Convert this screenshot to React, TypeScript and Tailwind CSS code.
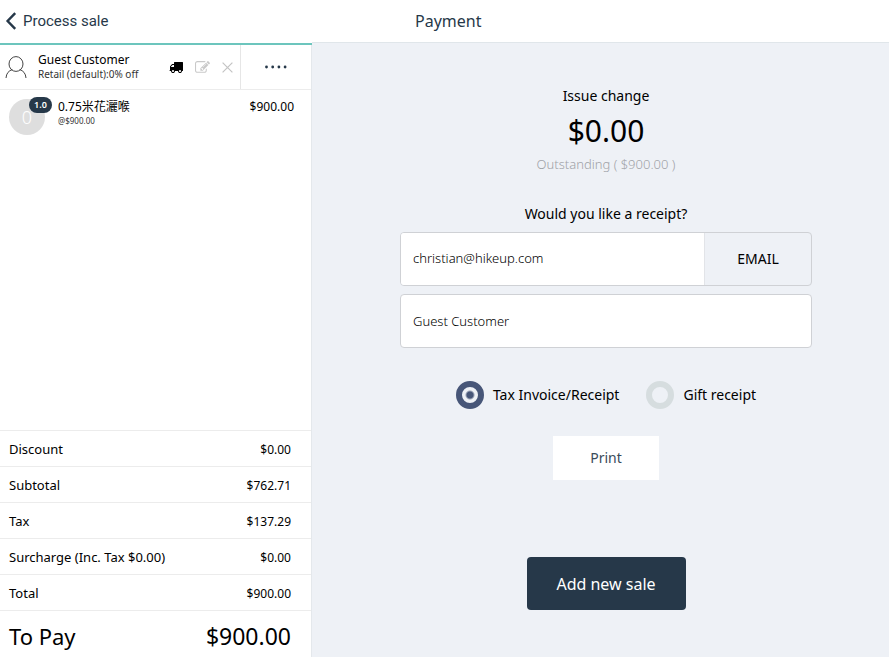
import { ReactNode } from "react";

const totals = [
  { label: "Discount", value: "$0.00" },
  { label: "Subtotal", value: "$762.71" },
  { label: "Tax", value: "$137.29" },
  { label: "Surcharge (Inc. Tax $0.00)", value: "$0.00" },
  { label: "Total", value: "$900.00" },
];

const BackIcon = () => (
  <svg viewBox="0 0 12 18" className="w-3 h-[18px]" fill="none" stroke="currentColor" strokeWidth="2.4">
    <path d="M10.2 1.2 2.6 9l7.6 7.8" />
  </svg>
);

const UserIcon = () => (
  <svg viewBox="0 0 22 23" className="w-[22px] h-[23px] shrink-0" fill="none" stroke="#444" strokeWidth="1">
    <ellipse cx="11" cy="8" rx="7" ry="7.4" />
    <path d="M1 22c.3-4.6 2.8-7.4 6.3-8.4M21 22c-.3-4.6-2.8-7.4-6.3-8.4" />
  </svg>
);

const TruckIcon = () => (
  <svg viewBox="0 0 1792 1792" className="w-[14px] h-[14px]" fill="currentColor">
    <path d="M640 1408q0-52-38-90t-90-38-90 38-38 90 38 90 90 38 90-38 38-90zm-384-512h384v-256h-158q-13 0-22 9l-195 195q-9 9-9 22v30zm1280 512q0-52-38-90t-90-38-90 38-38 90 38 90 90 38 90-38 38-90zm256-1088v1024q0 15-4 26.5t-13.5 18.5-16.5 11.5-23.5 6-22.5 2-25.5 0-22.5-.5q0 106-75 181t-181 75-181-75-75-181h-384q0 106-75 181t-181 75-181-75-75-181h-64q-3 0-22.5.5t-25.5 0-22.5-2-23.5-6-16.5-11.5-13.5-18.5-4-26.5q0-26 19-45t45-19v-320q0-8-.5-35t0-38 2.5-34.5 6.5-37 14-30.5 22.5-30l198-198q19-19 50.5-32t58.5-13h160v-192q0-26 19-45t45-19h1024q26 0 45 19t19 45z" />
  </svg>
);

const EditIcon = () => (
  <svg viewBox="0 0 1792 1792" className="w-[15px] h-[15px]" fill="currentColor">
    <path d="M888 1184l116-116-152-152-116 116v56h96v96h56zm440-720q-16-16-33 1l-350 350q-17 17-1 33t33-1l350-350q17-17 1-33zm80 594v190q0 119-84.5 203.5t-203.5 84.5h-832q-119 0-203.5-84.5t-84.5-203.5v-832q0-119 84.5-203.5t203.5-84.5h832q63 0 117 25 15 7 18 23 3 17-9 29l-49 49q-14 14-32 8-23-6-45-6h-832q-66 0-113 47t-47 113v832q0 66 47 113t113 47h832q66 0 113-47t47-113v-126q0-13 9-22l64-64q15-15 35-7t20 29zm-96-738l288 288-672 672h-288v-288zm444 132l-92 92-288-288 92-92q28-28 68-28t68 28l152 152q28 28 28 68t-28 68z" />
  </svg>
);

const CloseIcon = () => (
  <svg viewBox="0 0 11 11" className="w-[11px] h-[11px]" fill="none" stroke="currentColor" strokeWidth="1.2">
    <path d="M.6.6l9.8 9.8M10.4.6.6 10.4" />
  </svg>
);

const DotsIcon = () => (
  <svg viewBox="0 0 24 4" className="w-6 h-1" fill="currentColor">
    <circle cx="2.5" cy="2" r="1.4" />
    <circle cx="8.7" cy="2" r="1.4" />
    <circle cx="14.9" cy="2" r="1.4" />
    <circle cx="21.1" cy="2" r="1.4" />
  </svg>
);

interface ReceiptOptionProps {
  children: ReactNode;
  checked?: boolean;
}

const ReceiptOption = ({ children, checked }: ReceiptOptionProps) => (
  <label className="flex items-center gap-[9px] text-sm whitespace-nowrap">
    <input
      type="radio"
      name="receipt"
      defaultChecked={checked}
      className="appearance-none w-7 h-7 shrink-0 rounded-full border-6 border-[#d6dddf] checked:border-[#475678] checked:bg-[radial-gradient(circle,#475678_3px,#eef1f6_5px)] bg-origin-border bg-no-repeat"
    />
    {children}
  </label>
);

const Sidebar = () => (
  <aside className="w-[312px] shrink-0 flex flex-col bg-white">
    <header className="h-[45px] border-b-2 border-[#6cc5bd]">
      <button className="h-[42px] flex items-center gap-1.5 pl-[5px] text-[15px] text-[#263849] font-[Roboto,sans-serif]">
        <BackIcon />
        Process sale
      </button>
    </header>

    <div className="flex-1 flex flex-col border-r border-[#e4e8ec]">
      <div className="h-[45px] flex border-b border-[#ececec]">
        <div className="flex-1 flex items-center pl-[5px] pr-[7px]">
          <UserIcon />
          <div className="flex-1 pl-[11px] whitespace-nowrap">
            <div className="text-xs leading-[14px]">Guest Customer</div>
            <div className="text-[10px] leading-[14px] text-[#333]">Retail (default):0% off</div>
          </div>
          <div className="flex items-center gap-3">
            <button aria-label="Deliver order"><TruckIcon /></button>
            <button aria-label="Edit customer" className="text-[#c9c9c9]"><EditIcon /></button>
            <button aria-label="Remove customer" className="text-[#c4c4c4]"><CloseIcon /></button>
          </div>
        </div>
        <button aria-label="More" className="w-[71px] flex items-center justify-center border-l border-[#e6e6e6] text-[#263849]">
          <DotsIcon />
        </button>
      </div>

      <div className="flex-1 flex items-start pl-[9px] pr-[17px] pt-[9px]">
        <div className="relative w-9 h-9 shrink-0 rounded-full bg-[#dedede] flex items-center justify-center text-lg text-white font-light">
          0
          <span className="absolute -top-0.5 left-[20px] h-4 w-[23px] rounded-full bg-[#263849] flex items-center justify-center text-[9px] font-semibold">
            1.0
          </span>
        </div>
        <div className="flex-1 pl-[13px]">
          <div className="text-xs leading-4">0.75米花灑喉</div>
          <div className="text-[8px] leading-3 text-[#333]">@$900.00</div>
        </div>
        <div className="text-xs leading-4">$900.00</div>
      </div>

      <dl className="text-[13px]">
        {totals.map(({ label, value }) => (
          <div key={label} className="h-9 flex items-center justify-between pl-[9px] pr-5 pt-0.5 border-t border-[#ececec]">
            <dt>{label}</dt>
            <dd className="text-xs">{value}</dd>
          </div>
        ))}
        <div className="h-[47px] flex items-center justify-between pl-[9px] pr-5 pt-1 border-t border-[#ececec]">
          <dt className="text-[22px]">To Pay</dt>
          <dd className="text-[23px]">$900.00</dd>
        </div>
      </dl>
    </div>
  </aside>
);

const Payment = () => (
  <main className="flex-1 flex flex-col">
    <header className="h-[43px] flex items-center pl-[103px] bg-white border-b border-[#e0e6ea] text-base text-[#263849]">
      <h1>Payment</h1>
    </header>
    <section className="flex flex-col items-center pl-[88px] pr-[77px] pt-[43px]">
      <h2 className="text-sm leading-5">Issue change</h2>
      <p className="mt-2 text-[30px] leading-[34px]">$0.00</p>
      <p className="mt-1.5 text-[13px] leading-5 font-light text-[#9fa2a7]">Outstanding ( $900.00 )</p>

      <p className="mt-[30px] text-sm leading-5">Would you like a receipt?</p>
      <div className="mt-2 w-full h-[54px] flex rounded border border-[#cfd1d5] overflow-hidden">
        <input
          aria-label="Email"
          defaultValue="christian@hikeup.com"
          className="flex-1 min-w-0 px-3 bg-white text-[13px] font-light text-black"
        />
        <button className="w-[107px] border-l border-[#e2e4e8] text-sm">EMAIL</button>
      </div>
      <input
        aria-label="Customer name"
        defaultValue="Guest Customer"
        className="mt-2 w-full h-[54px] px-3 rounded border border-[#cfd1d5] bg-white text-[13px] font-light text-black"
      />

      <div className="mt-[33px] flex gap-[27px]">
        <ReceiptOption checked>Tax Invoice/Receipt</ReceiptOption>
        <ReceiptOption>Gift receipt</ReceiptOption>
      </div>

      <button className="mt-[27px] w-[106px] h-11 bg-white text-sm text-[#3a4a5a]">Print</button>
      <button className="mt-[77px] w-[159px] h-[53px] rounded bg-[#263849] text-base text-white">Add new sale</button>
    </section>
  </main>
);

export default function App() {
  return (
    <div className="min-h-screen flex bg-[#eef1f6] text-black font-['Noto_Sans','Noto_Sans_CJK_TC',sans-serif]">
      <Sidebar />
      <Payment />
    </div>
  );
}
